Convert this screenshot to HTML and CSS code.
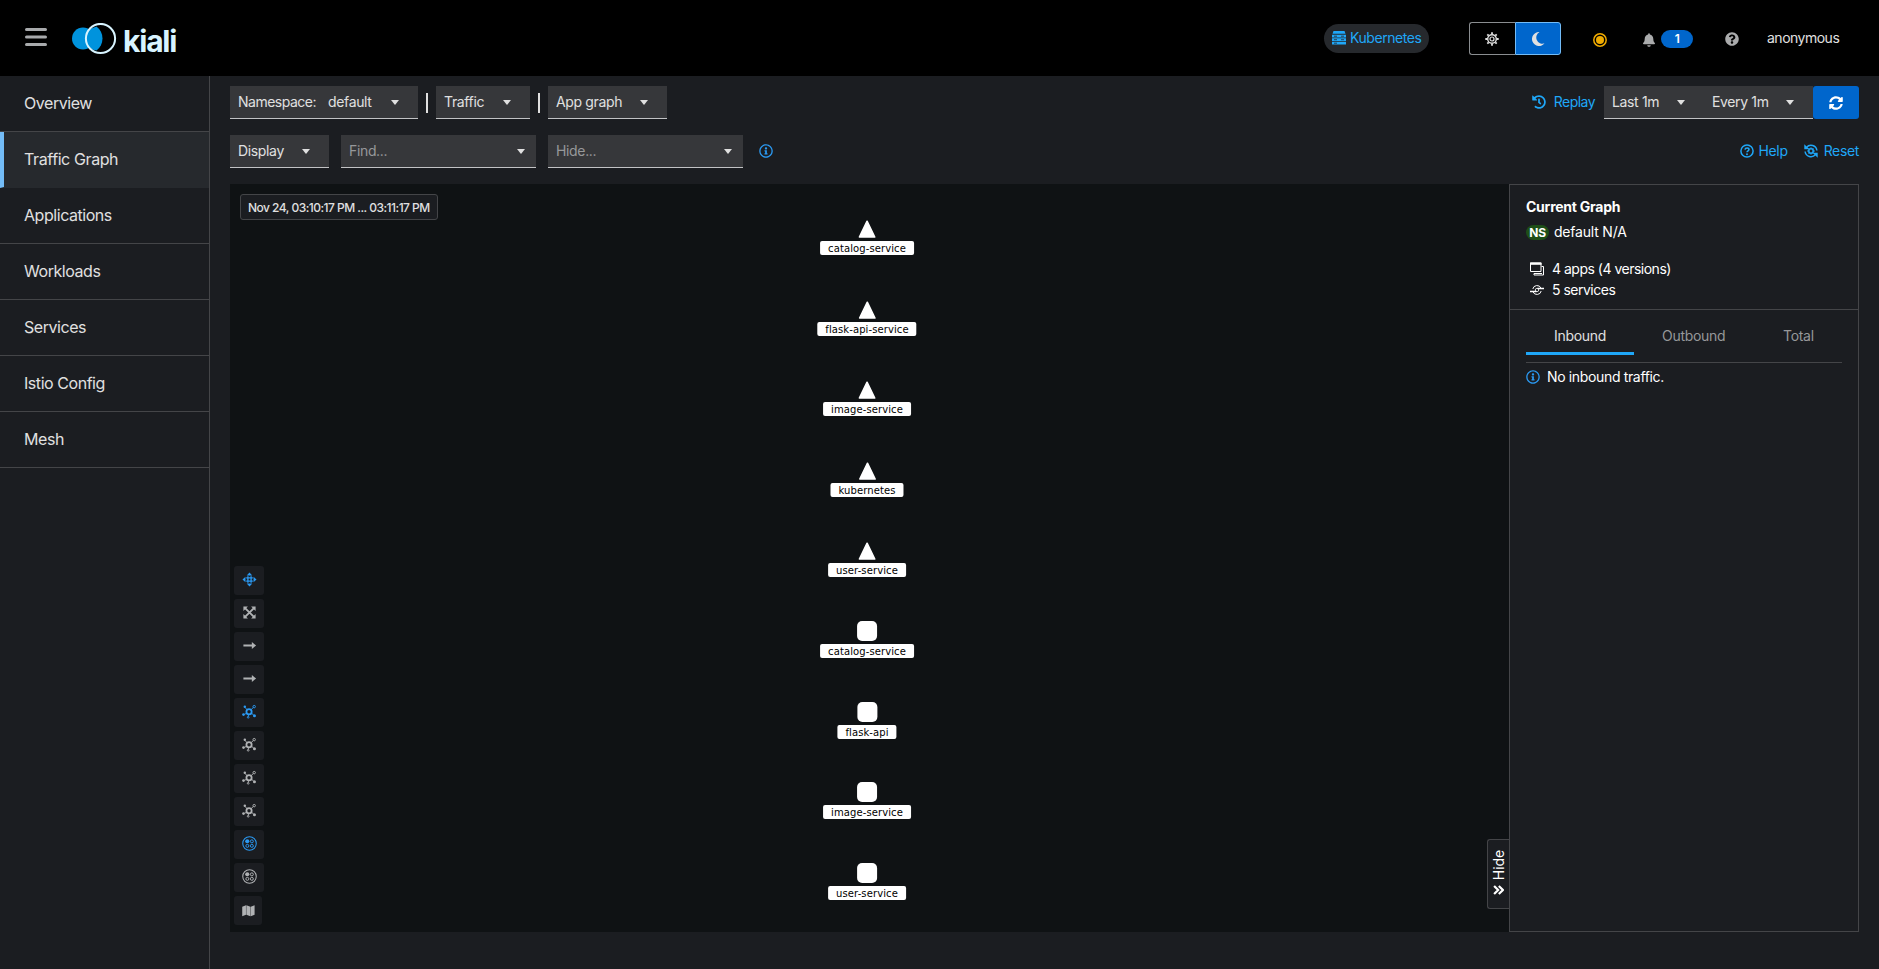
FILE: index.html
```html
<!DOCTYPE html>
<html lang="en">
<head>
<meta charset="utf-8">
<title>Kiali</title>
<link rel="stylesheet" href="styles.css">
</head>
<body>
<svg class="defs" aria-hidden="true">
  <symbol id="i-info" viewBox="0 0 512 512"><path d="M256 8C119 8 8 119 8 256s111 248 248 248 248-111 248-248S393 8 256 8zm0 448c-110.500 0-200-89.400-200-200 0-110.500 89.500-200 200-200 110.500 0 200 89.500 200 200 0 110.500-89.400 200-200 200zm0-338c23.200 0 42 18.800 42 42s-18.800 42-42 42-42-18.800-42-42 18.800-42 42-42zm56 254c0 6.600-5.400 12-12 12h-88c-6.600 0-12-5.400-12-12v-24c0-6.600 5.400-12 12-12h12v-64h-12c-6.600 0-12-5.400-12-12v-24c0-6.600 5.400-12 12-12h64c6.600 0 12 5.400 12 12v100h12c6.600 0 12 5.400 12 12v24z"/></symbol>
  <symbol id="i-topo" viewBox="0 0 16 16"><g fill="none" stroke="currentColor"><circle cx="7.500" cy="8.200" r="2.800" stroke-width="1.900"/><circle cx="13" cy="2.800" r="1.300"/><circle cx="6.600" cy="14.200" r=".9"/><path d="M9.500 6.200l2.500-2.400M5.300 6.200L3.500 3.800M5.200 9.800L2.500 11M7 11l-.3 2.200M9.900 9.800l2.500 1.800"/></g><circle cx="3" cy="3" r="1.300"/><circle cx="1.600" cy="11.300" r="1.400"/><circle cx="13.300" cy="12.400" r="1.600"/></symbol>
  <symbol id="i-boxes" viewBox="0 0 16 16"><g fill="none" stroke="currentColor"><circle cx="8" cy="8" r="7.200" stroke-width="1.100"/><circle cx="10.500" cy="5.700" r="1.600"/><circle cx="5.700" cy="10.500" r="1.600"/><circle cx="10.500" cy="10.500" r="1.600"/></g><circle cx="5.600" cy="5.600" r="2.200"/></symbol>
  <symbol id="i-arrow" viewBox="0 0 16 16"><path d="M1.500 6.900h9V4.200L15 8l-4.500 3.800V9.100h-9z"/></symbol>
</svg>
<header class="masthead">
  <svg class="burger" viewBox="0 0 22 20"><path d="M1.500 2.500h19M1.500 10h19M1.500 17.500h19"/></svg>
  <svg class="logo-mark" viewBox="0 0 46 32"><circle class="logo-blue" cx="11" cy="15.500" r="11"/><path class="logo-blue" d="M24.500 3.500a15 15 0 0 1 0 24A14 14 0 0 1 18 25L14 15.500 18 6z"/><circle class="logo-ring" cx="28.500" cy="15.500" r="14.600"/></svg>
  <span class="brand">kiali</span>
  <div class="cluster">
    <svg class="i14" viewBox="0 0 14 14"><path d="M1.500 0h11l1 2.800h-13zM0 3.800h14v2.700H0zM0 7.300h14v2.700H0zM0 10.800h14v2.700H0z"/><path class="cluster-dots" d="M2 5.200h3M9 5.200h3M2 8.700h3M9 8.700h3M2 12.200h3"/></svg>
    <span>Kubernetes</span>
  </div>
  <div class="theme">
    <span class="theme-opt"><svg class="i14" viewBox="0 0 14 14"><g fill="none" stroke="currentColor"><circle cx="7" cy="7" r="4.300" stroke-width="1.400"/><circle cx="7" cy="7" r="2" stroke-width="1.200"/><path stroke-width="1.800" d="M7 .3v2M7 11.700v2M.3 7h2M11.700 7h2M2.300 2.300l1.400 1.400M10.300 10.300l1.400 1.400M2.300 11.700l1.400-1.400M10.300 3.700l1.400-1.400"/></g></svg></span>
    <span class="theme-opt dark"><svg class="i14" viewBox="0 0 14 14"><path d="M8.500 0a7 7 0 1 0 5 11.300A6.200 6.200 0 0 1 8.500 0z"/></svg></span>
  </div>
  <svg class="i14 mtls" viewBox="0 0 14 14"><circle cx="7" cy="7" r="6.200" fill="none" stroke="currentColor" stroke-width="1.500"/><circle cx="7" cy="7" r="4"/></svg>
  <div class="bell"><svg viewBox="0 0 448 512"><path d="M224 512c35.300 0 64-28.600 64-64H160c0 35.400 28.600 64 64 64zm215.400-149.700c-19.300-20.800-55.500-52-55.500-154.300 0-77.700-54.500-139.900-127.900-155.200V32c0-17.700-14.300-32-32-32s-32 14.300-32 32v20.800C118.600 68.100 64.100 130.300 64.100 208c0 102.300-36.200 133.500-55.500 154.300C2.600 368.800 0 376.500 0 384c.1 16.400 13 32 32.100 32h383.800c19.100 0 32-15.600 32.100-32 0-7.500-2.600-15.200-8.600-21.700z"/></svg><span class="count">1</span></div>
  <svg class="i14 quest" viewBox="0 0 512 512"><path d="M504 256c0 137-111 248-248 248S8 393 8 256 119 8 256 8s248 111 248 248zM262.700 90c-54.500 0-89.300 23-116.500 63.800-3.500 5.300-2.400 12.400 2.700 16.300l34.700 26.300c5.200 3.900 12.600 3 16.700-2.100 17.900-22.700 30.100-35.800 57.300-35.800 20.400 0 45.700 13.100 45.700 33 0 15-12.400 22.700-32.500 34C247.100 238.500 216 255 216 296v4c0 6.600 5.400 12 12 12h56c6.600 0 12-5.400 12-12v-1.300c0-28.800 84.200-30 84.200-108 0-58.700-60.900-100.700-117.500-100.700zM256 338c-25.400 0-46 20.600-46 46s20.600 46 46 46 46-20.600 46-46-20.600-46-46-46z"/></svg>
  <span class="user">anonymous</span>
</header>
<div class="shell">
  <nav class="side">
    <a class="nav">Overview</a>
    <a class="nav active">Traffic Graph</a>
    <a class="nav">Applications</a>
    <a class="nav">Workloads</a>
    <a class="nav">Services</a>
    <a class="nav">Istio Config</a>
    <a class="nav">Mesh</a>
  </nav>
  <main class="page">
    <div class="bar">
      <div class="sel w-ns"><span class="ns-key">Namespace:</span><span>default</span><i class="caret"></i></div>
      <i class="sep"></i>
      <div class="sel w-traffic"><span>Traffic</span><i class="caret"></i></div>
      <i class="sep"></i>
      <div class="sel w-app"><span>App graph</span><i class="caret"></i></div>
      <div class="right">
        <a class="link replay"><svg class="i14" viewBox="0 0 512 512"><path d="M504 255.500c.3 136.600-111.200 248.400-247.800 248.500-59 0-113.200-20.500-155.800-54.900-11.100-8.900-11.900-25.500-1.800-35.600l11.300-11.300c8.600-8.600 22.400-9.600 31.900-2C173.100 425.100 212.800 440 256 440c101.700 0 184-82.300 184-184 0-101.700-82.300-184-184-184-48.800 0-93.100 19-126.100 49.900l50.800 50.800c10.100 10.100 2.900 27.300-11.300 27.300H24c-8.800 0-16-7.200-16-16V38.600c0-14.300 17.200-21.400 27.300-11.300l49.400 49.400C129.200 34.100 189.600 8 256 8c136.800 0 247.700 110.800 248 247.500zM323 334.500l9.800-12.600c8.100-10.500 6.300-25.500-4.200-33.700L288 256.300V152c0-13.300-10.700-24-24-24h-16c-13.300 0-24 10.700-24 24v135.700l65.400 50.900c10.500 8.100 25.500 6.300 33.600-4.100z"/></svg><span>Replay</span></a>
        <div class="sel w-last"><span>Last 1m</span><i class="caret"></i></div>
        <div class="sel w-every"><span>Every 1m</span><i class="caret"></i></div>
        <div class="refresh"><svg class="i14" viewBox="0 0 512 512"><path d="M370.700 133.300C339.500 104 298.900 88 255.800 88c-77.500.1-144.300 53.200-162.800 126.900-1.300 5.400-6.100 9.200-11.700 9.200H24.100c-7.500 0-13.200-6.800-11.800-14.200C33.900 94.900 134.800 8 256 8c66.400 0 126.800 26.100 171.300 68.700L463 41c15.100-15.100 41-4.400 41 17v134c0 13.300-10.700 24-24 24H346c-21.400 0-32.100-25.900-17-41l41.700-41.700zM32 296h134c21.400 0 32.100 25.900 17 41l-41.800 41.800c31.300 29.300 71.800 45.300 114.900 45.300 77.400-.1 144.300-53.100 162.800-126.800 1.300-5.400 6.100-9.200 11.700-9.200h57.300c7.500 0 13.200 6.800 11.800 14.200C478.100 417.100 377.200 504 256 504c-66.400 0-126.800-26.100-171.300-68.700L49 471c-15.100 15.100-41 4.400-41-17V320c0-13.300 10.700-24 24-24z"/></svg></div>
      </div>
    </div>
    <div class="bar second">
      <div class="sel w-display"><span>Display</span><i class="caret"></i></div>
      <div class="sel w-find"><span class="ph">Find...</span><i class="caret"></i></div>
      <div class="sel w-find"><span class="ph">Hide...</span><i class="caret"></i></div>
      <svg class="i14 info bar-info"><use href="#i-info"/></svg>
      <div class="right">
        <a class="link help"><svg class="i14" viewBox="0 0 14 14"><circle cx="7" cy="7" r="6.100" fill="none" stroke="currentColor" stroke-width="1.500"/><path fill="none" stroke="currentColor" stroke-width="1.500" d="M5 5.600C5.200 3.300 9 3.400 9 5.500 9 6.800 7 6.800 7 8.300"/><circle cx="7" cy="10.300" r=".95"/></svg><span>Help</span></a>
        <a class="link reset"><svg class="i14" viewBox="0 0 14 14"><g fill="none" stroke="currentColor"><circle cx="7" cy="7" r="2.200" stroke-width="1.500"/><path stroke-width="1.500" d="M2.500 3.400A5.900 5.900 0 0 1 12.900 6.500M11.500 10.600A5.900 5.900 0 0 1 1.100 7.500"/><path stroke-width="1.300" d="M7 3.400v1.200M7 9.400v1.200M3.400 7h1.200M9.400 7h1.200M4.500 4.500l.8.800M8.700 8.700l.8.800M4.500 9.500l.8-.8M8.700 5.300l.8-.8"/></g><path d="M.3.300v5h5zM13.700 13.700v-5h-5z"/></svg><span>Reset</span></a>
      </div>
    </div>
    <div class="work">
      <section class="graph">
        <div class="stamp">Nov 24, 03:10:17 PM ... 03:11:17 PM</div>
        <div class="node n1"><svg class="tri" viewBox="0 0 20 20"><path d="M10 2.200L17.700 18H2.300z"/></svg><span>catalog-service</span></div>
        <div class="node n2"><svg class="tri" viewBox="0 0 20 20"><path d="M10 2.200L17.700 18H2.300z"/></svg><span>flask-api-service</span></div>
        <div class="node n3"><svg class="tri" viewBox="0 0 20 20"><path d="M10 2.200L17.700 18H2.300z"/></svg><span>image-service</span></div>
        <div class="node n4"><svg class="tri" viewBox="0 0 20 20"><path d="M10 2.200L17.700 18H2.300z"/></svg><span>kubernetes</span></div>
        <div class="node n5"><svg class="tri" viewBox="0 0 20 20"><path d="M10 2.200L17.700 18H2.300z"/></svg><span>user-service</span></div>
        <div class="node n6"><i class="sq"></i><span>catalog-service</span></div>
        <div class="node n7"><i class="sq"></i><span>flask-api</span></div>
        <div class="node n8"><i class="sq"></i><span>image-service</span></div>
        <div class="node n9"><i class="sq"></i><span>user-service</span></div>
        <div class="tools">
          <b class="on"><svg viewBox="0 0 16 16"><path d="M8 .5l3 3.200H5zM8 15.500l3-3.200H5zM.5 8l3.200-3v6zM15.500 8l-3.200-3v6z"/><path fill="none" stroke="currentColor" stroke-width="1.400" d="M4.500 6.300h7M4.500 9.700h7M6.300 4.500v7M9.700 4.500v7"/></svg></b>
          <b><svg viewBox="0 0 16 16"><path d="M1.500 1.500h4.800L1.500 6.300zM14.500 1.500v4.800L9.700 1.500zM1.500 14.500V9.700l4.800 4.800zM14.500 14.500H9.700l4.800-4.800z"/><path stroke="currentColor" stroke-width="2" d="M3 3l10 10M13 3L3 13"/></svg></b>
          <b><svg><use href="#i-arrow"/></svg></b>
          <b><svg><use href="#i-arrow"/></svg></b>
          <b class="on"><svg><use href="#i-topo"/></svg></b>
          <b><svg><use href="#i-topo"/></svg></b>
          <b><svg><use href="#i-topo"/></svg></b>
          <b><svg><use href="#i-topo"/></svg></b>
          <b class="on"><svg><use href="#i-boxes"/></svg></b>
          <b><svg><use href="#i-boxes"/></svg></b>
          <b class="last"><svg viewBox="0 0 16 16"><path d="M1.300 4l4-1.600v10L1.300 14zM5.700 2.400l4.300 1.600v10l-4.300-1.600zM10.400 4l4.100-1.600v10l-4.100 1.600z"/></svg></b>
        </div>
        <div class="hide"><span>Hide</span><svg viewBox="0 0 10 9"><path d="M1 .8L4.700 4.500 1 8.200M5.300.8L9 4.500 5.300 8.200"/></svg></div>
      </section>
      <aside class="panel">
        <div class="summary">
          <strong>Current Graph</strong>
          <div class="nsrow"><span class="badge">NS</span><span>default N/A</span></div>
          <div class="stat"><svg class="i14" viewBox="0 0 14 14"><path fill="none" stroke="currentColor" d="M.5 1h10.500v8.500H.5zM11.500 4.500h2v8.500H4v-1.500h8"/><path d="M0 .5h11.500v2.300H0z"/></svg><span>4 apps (4 versions)</span></div>
          <div class="stat svc"><svg class="i14" viewBox="0 0 14 14"><g fill="none" stroke="currentColor"><path d="M2.800 6a4.300 4.300 0 0 1 8.200-.8M11.200 8a4.300 4.300 0 0 1-8.200.8"/><circle cx="7" cy="7" r="1.700" stroke-width=".8"/><path stroke-width="1.300" d="M7.500 5.500H14M0 8.500h6.500"/></g></svg><span>5 services</span></div>
        </div>
        <div class="tabs"><span class="tab cur">Inbound</span><span class="tab t2">Outbound</span><span class="tab">Total</span></div>
        <div class="none"><svg class="i14 info"><use href="#i-info"/></svg><span>No inbound traffic.</span></div>
      </aside>
    </div>
  </main>
</div>
</body>
</html>
```
FILE: styles.css
```css
* { box-sizing: border-box; }
body { margin: 0; width: 1879px; height: 969px; overflow: hidden; display: flex; flex-direction: column; background: #1b1d21; color: #e0e0e0; font: 14px/20px Inter, sans-serif; letter-spacing: -0.35px; }
svg { display: block; flex: none; fill: currentColor; }
.defs { position: absolute; width: 0; height: 0; }
.i14 { width: 14px; height: 14px; }

.masthead { height: 76px; flex: none; background: #000; display: flex; align-items: center; padding-right: 40px; }
.burger { width: 22px; height: 20px; margin: 0 25px 2px 25px; stroke: #a8aaac; stroke-width: 3; stroke-linecap: round; }
.logo-mark { width: 46px; height: 32px; margin-top: 2px; }
.logo-blue { fill: #0093dd; }
.logo-ring { fill: none; stroke: #d8f4ff; stroke-width: 2; }
.brand { margin-left: 5px; width: 60px; padding-top: 5px; color: #d8f4ff; font-weight: 700; font-size: 30px; line-height: 32px; letter-spacing: -1.2px; }
.cluster { margin-left: auto; width: 105px; height: 29px; border-radius: 15px; background: #26292d; color: #1fa7f8; display: flex; align-items: center; padding-left: 8px; gap: 4px; letter-spacing: -0.45px; }
.cluster-dots { stroke: #26292d; stroke-width: .8; }
.theme { margin: 1px 32px 0 40px; width: 92px; height: 33px; display: flex; }
.theme-opt { flex: 1; display: flex; align-items: center; justify-content: center; border: 1px solid #8a8d90; border-right: 0; border-radius: 3px 0 0 3px; }
.theme-opt.dark { background: #0066cc; border: 1px solid #73bcf7; border-radius: 0 3px 3px 0; }
.mtls { color: #f0ab00; margin-top: 4px; }
.bell { margin: 2px 32px 0 36px; display: flex; align-items: center; gap: 6px; color: #aaabac; }
.bell svg { width: 12px; height: 14px; margin-top: 2px; }
.count { width: 32px; height: 18px; border-radius: 9px; background: #0066cc; color: #fff; text-align: center; font-size: 12px; font-weight: 600; line-height: 18px; }
.quest { color: #aaabac; margin: 2px 28px 0 0; }
.user { width: 72px; letter-spacing: -0.5px; }

.shell { flex: 1; display: flex; }
.side { width: 210px; border-right: 1px solid #444548; }
.nav { display: block; height: 56px; padding: 16px 24px 0; font-size: 16px; line-height: 22px; letter-spacing: -0.45px; border-bottom: 1px solid #444548; }
.nav.active { background: #26292d; border-left: 4px solid #73bcf7; border-bottom-color: #26292d; padding-left: 20px; letter-spacing: -0.4px; }

.page { flex: 1; padding: 10px 20px 0; }
.bar { display: flex; height: 33px; align-items: center; }
.second { margin-top: 16px; margin-bottom: 16px; }
.sel { height: 33px; background: #36373a; border-bottom: 1px solid #c2c3c5; display: flex; align-items: center; justify-content: space-between; padding: 0 19px 0 8px; }
.caret { border: 4.5px solid transparent; border-top: 5px solid #e0e0e0; border-bottom: 0; margin-top: 1px; }
.ns-key { width: 90px; letter-spacing: -0.5px; }
.w-ns { width: 188px; justify-content: flex-start; }
.w-ns .caret { margin-left: auto; }
.w-traffic { width: 94px; }
.w-app { width: 119px; }
.w-last { width: 100px; margin-left: 9px; }
.w-every { width: 109px; }
.w-display { width: 99px; margin-right: 12px; }
.w-find { width: 195px; margin-right: 12px; padding-right: 11px; }
.bar-info { margin: 0 0 2px 4px; }
.ph { color: #96989a; }
.sep { width: 2px; height: 20px; background: #e0e0e0; margin: 0 8px; }
.right { margin-left: auto; display: flex; align-items: center; }
.link { display: flex; align-items: center; gap: 5px; color: #1fa7f8; padding-bottom: 2px; }
.replay { gap: 8px; letter-spacing: -0.55px; }
.help { margin-right: 16px; }
.reset { gap: 6px; }
.refresh { width: 46px; height: 33px; border-radius: 3px; background: #0066cc; color: #fff; display: flex; align-items: center; justify-content: center; }
.info { color: #2b9af3; }

.work { display: flex; height: 748px; }
.graph { flex: 1; position: relative; background: #0f1214; }
.stamp { position: absolute; left: 10px; top: 10px; width: 198px; height: 26px; border: 1px solid #444548; border-radius: 3px; background: #1b1d21; font-size: 12px; font-weight: 500; line-height: 25px; letter-spacing: -0.52px; padding-left: 7px; white-space: nowrap; }
.node { position: absolute; left: 637px; transform: translateX(-50%); display: flex; flex-direction: column; align-items: center; gap: 3px; }
.node span { background: #fff; color: #000; border-radius: 2px; height: 14px; padding: 0 8px; font: 10px/15px "DejaVu Sans", sans-serif; letter-spacing: 0.1px; white-space: nowrap; }
.tri { width: 20px; height: 20px; margin: 1px 0 -1px; fill: #fff; stroke: #fff; stroke-width: 1.500; stroke-linejoin: round; }
.sq { width: 20px; height: 20px; border-radius: 5px; background: #fff; }
.n1 { top: 34px; } .n2 { top: 115px; } .n3 { top: 195px; } .n4 { top: 276px; } .n5 { top: 356px; }
.n6 { top: 437px; } .n7 { top: 518px; } .n8 { top: 598px; } .n9 { top: 679px; }
.tools { position: absolute; left: 4px; top: 382px; display: flex; flex-direction: column; gap: 4px; color: #b0b2b4; }
.tools b { width: 30px; height: 29px; border-radius: 3px; background: #1b1d21; display: flex; align-items: center; justify-content: center; padding-bottom: 2px; }
.tools svg { width: 15px; height: 15px; }
.tools .on { color: #2b9af3; }
.tools .last { width: 28px; padding-bottom: 0; }
.hide { position: absolute; right: 0; top: 655px; width: 22px; height: 70px; border: 1px solid #444548; border-radius: 3px 0 0 3px; border-right: 0; background: #1b1d21; color: #fff; writing-mode: vertical-rl; display: flex; align-items: center; padding-top: 10px; gap: 5px; }
.hide span { transform: rotate(180deg); letter-spacing: -0.1px; }
.hide svg { width: 11px; height: 10px; fill: none; stroke: #fff; stroke-width: 2; margin-right: 1px; }
.panel { width: 350px; border: 1px solid #444548; color: #fff; }
.summary { height: 125px; border-bottom: 1px solid #444548; padding: 12px 16px; }
.summary strong { display: block; letter-spacing: -0.25px; }
.nsrow { display: flex; align-items: center; gap: 5px; margin: 5px 0 16px; letter-spacing: -0.2px; }
.badge { width: 23px; height: 15px; border-radius: 8px; background: #1e4f18; font-size: 12px; font-weight: 700; line-height: 15px; text-align: center; }
.stat { display: flex; align-items: center; gap: 8px; height: 21px; padding-left: 4px; letter-spacing: -0.5px; }
.tabs { display: flex; margin: 0 16px; height: 53px; border-bottom: 1px solid #444548; letter-spacing: -0.3px; }
.tab { padding: 16px 28px 0; height: 45px; color: #96989a; }
.cur { width: 108px; color: #e0e0e0; border-bottom: 3px solid #1fa7f8; }
.t2 { width: 121px; }
.none { display: flex; align-items: center; gap: 7px; padding: 4px 16px; letter-spacing: -0.35px; }
```
